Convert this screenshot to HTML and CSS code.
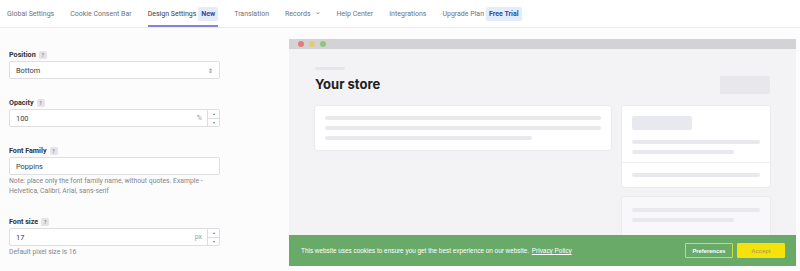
FILE: index.html
```html
<!DOCTYPE html>
<html lang="en">
<head>
  <meta charset="UTF-8" />
  <meta name="viewport" content="width=device-width, initial-scale=1.0"/>
  <title>Design Settings</title>
  <link rel="stylesheet" href="styles.css">
</head>
<body>

  <div class="tabs">
    <div class="tab">Global Settings</div>
    <div class="tab">Cookie Consent Bar</div>
    <div class="tab active">Design Settings <span class="badge">New</span></div>
    <div class="tab">Translation</div>
    <div class="tab">Records <span class="chev">&#8964;</span></div>
    <div class="tab">Help Center</div>
    <div class="tab">Integrations</div>
    <div class="tab">Upgrade Plan <span class="badge">Free Trial</span></div>
  </div>

  <div class="main">
    <div class="form">
      <div class="field">
        <div class="label">Position <span class="help">?</span></div>
        <div class="control">
          <span class="value">Bottom</span>
          <span class="selectArrows">&#8661;</span>
        </div>
      </div>

      <div class="field">
        <div class="label">Opacity <span class="help">?</span></div>
        <div class="control">
          <span class="value">100</span>
          <span class="unit">%</span>
          <div class="spinner"><span>&#9652;</span><span>&#9662;</span></div>
        </div>
      </div>

      <div class="field withNote">
        <div class="label">Font Family <span class="help">?</span></div>
        <div class="control">
          <span class="value">Poppins</span>
        </div>
        <div class="note">Note: place only the font family name, without quotes. Example - Helvetica, Calibri, Arial, sans-serif</div>
      </div>

      <div class="field">
        <div class="label">Font size <span class="help">?</span></div>
        <div class="control">
          <span class="value">17</span>
          <span class="unit">px</span>
          <div class="spinner"><span>&#9652;</span><span>&#9662;</span></div>
        </div>
        <div class="note">Default pixel size is 16</div>
      </div>
    </div>

    <div class="preview">
      <div class="chrome">
        <span class="dot red"></span>
        <span class="dot yellow"></span>
        <span class="dot green"></span>
      </div>
      <div class="store">
        <div class="crumb"></div>
        <div class="storeHead">
          <div class="storeTitle">Your store</div>
          <div class="ghostButton"></div>
        </div>
        <div class="cards">
          <div class="card mainCard">
            <div class="line"></div>
            <div class="line"></div>
            <div class="line short"></div>
          </div>
          <div class="side">
            <div class="card sideCard">
              <div class="sideTop">
                <div class="block"></div>
                <div class="line"></div>
                <div class="line half"></div>
              </div>
              <div class="sideBottom">
                <div class="line"></div>
              </div>
            </div>
            <div class="card sideCard faded">
              <div class="line"></div>
              <div class="line half"></div>
            </div>
          </div>
        </div>
      </div>

      <div class="cookieBar">
        <div class="cookieText">This website uses cookies to ensure you get the best experience on our website. <a href="#">Privacy Policy</a></div>
        <div class="cookieButtons">
          <button class="prefs">Preferences</button>
          <button class="accept">Accept</button>
        </div>
      </div>
    </div>
  </div>

</body>
</html>
```

FILE: styles.css
```css
body {
  margin: 0;
  padding: 0;
  font-family: Roboto, "Liberation Sans", sans-serif;
  background-color: #fcfcfd;
  color: #333;
  overflow: hidden;
  height: 271px;
}

.tabs {
  display: flex;
  height: 28px;
  border-bottom: 1px solid #ececef;
  background: #fff;
  padding-left: 7px;
  gap: 16px;
  box-sizing: border-box;
}

.tab {
  display: flex;
  align-items: center;
  gap: 2px;
  font-size: 7px;
  color: #6f7279;
  height: 27px;
  box-sizing: border-box;
  white-space: nowrap;
}

.tab.active {
  color: #3a3d44;
  border-bottom: 2px solid #8184d9;
  padding-top: 2px;
}

.badge {
  background: #e4ecf9;
  color: #2a4c9f;
  font-weight: bold;
  font-size: 7px;
  padding: 3px 3px;
  border-radius: 2px;
}

.chev {
  font-size: 7px;
  margin-left: 2px;
  margin-top: -3px;
}

.main {
  display: flex;
}

.form {
  width: 289px;
  padding: 22px 69px 0 9px;
  box-sizing: border-box;
  flex-shrink: 0;
}

.field {
  margin-bottom: 19px;
}

.field.withNote {
  margin-bottom: 21px;
}

.label {
  display: flex;
  align-items: center;
  gap: 3px;
  font-size: 7.2px;
  font-weight: bold;
  color: #2f3137;
  height: 9px;
  margin-bottom: 2px;
}

.help {
  display: inline-block;
  width: 8px;
  height: 8px;
  line-height: 8px;
  text-align: center;
  font-size: 5px;
  background: #e4e4e8;
  color: #8b8d93;
  border-radius: 2px;
}

.control {
  display: flex;
  align-items: center;
  height: 18px;
  background: #fff;
  border: 1px solid #dedee2;
  border-radius: 2px;
  box-sizing: border-box;
  padding-left: 6px;
  font-size: 7.4px;
  color: #3a3c42;
}

.value {
  flex: 1;
}

.selectArrows {
  font-size: 6px;
  color: #777;
  margin-right: 6px;
}

.unit {
  color: #9a9ca2;
  font-size: 7px;
  margin-right: 5px;
}

.spinner {
  display: flex;
  flex-direction: column;
  width: 11px;
  height: 100%;
  border-left: 1px solid #dedee2;
}

.spinner span {
  flex: 1;
  font-size: 4px;
  color: #777;
  text-align: center;
  line-height: 8px;
}

.spinner span + span {
  border-top: 1px solid #dedee2;
}

.note {
  font-size: 6.8px;
  color: #84868c;
  line-height: 10px;
  margin-top: 1px;
}

.preview {
  position: relative;
  width: 507px;
  height: 227px;
  margin-top: 11px;
  background: #f3f2f4;
  overflow: hidden;
}

.chrome {
  display: flex;
  align-items: center;
  gap: 5px;
  height: 10px;
  padding-left: 9px;
  background: #d3d2d5;
}

.dot {
  width: 6px;
  height: 6px;
  border-radius: 50%;
}

.dot.red { background: #e8797a; }
.dot.yellow { background: #ecc871; }
.dot.green { background: #8ec77c; }

.store {
  padding: 18px 26px 0 26px;
}

.crumb {
  width: 30px;
  height: 3px;
  border-radius: 2px;
  background: #e6e5e9;
}

.storeHead {
  display: flex;
  justify-content: space-between;
  align-items: center;
  margin-top: 6px;
  height: 18px;
}

.storeTitle {
  font-family: Inter, Roboto, sans-serif;
  font-size: 13px;
  font-weight: bold;
  color: #202124;
  margin-top: -2px;
}

.ghostButton {
  width: 50px;
  height: 18px;
  background: #e8e7eb;
  border-radius: 2px;
}

.cards {
  display: flex;
  align-items: flex-start;
  gap: 11px;
  margin-top: 12px;
}

.card {
  background: #fff;
  border-radius: 2px;
  box-shadow: 0 0 2px rgba(0,0,0,0.12);
}

.mainCard {
  width: 296px;
  padding: 10px;
  box-sizing: border-box;
}

.line {
  height: 4px;
  background: #e9e8ec;
  border-radius: 2px;
  margin-bottom: 6px;
}

.line:last-child {
  margin-bottom: 0;
}

.line.short { width: 75%; }
.line.half { width: 80%; }

.side {
  display: flex;
  flex-direction: column;
  gap: 10px;
  width: 148px;
}

.sideTop {
  padding: 10px 10px 8px;
  border-bottom: 1px solid #ececef;
}

.block {
  width: 60px;
  height: 14px;
  background: #e8e9ef;
  border-radius: 2px;
  margin-bottom: 10px;
}

.sideBottom {
  padding: 10px;
}

.sideCard.faded {
  background: #f8f8fb;
  padding: 11px 10px;
  height: 40px;
}

.cookieBar {
  position: absolute;
  left: 0;
  right: 0;
  bottom: 0;
  height: 31px;
  background: #6aaa69;
  display: flex;
  align-items: center;
  justify-content: space-between;
  padding: 0 11px 0 12px;
  font-family: "Liberation Sans", Arial, sans-serif;
}

.cookieText {
  color: #fff;
  font-size: 6.4px;
}

.cookieText a {
  color: #fff;
  margin-left: 1px;
}

.cookieButtons {
  display: flex;
  gap: 4px;
}

.cookieButtons button {
  width: 48px;
  height: 15px;
  font-family: "Liberation Sans", Arial, sans-serif;
  font-size: 5.8px;
  font-weight: bold;
  border-radius: 1px;
  padding: 0;
}

.prefs {
  background: transparent;
  color: #fff;
  border: 1.5px solid #d3dc3d;
}

.accept {
  background: #f5e20a;
  color: #b7a84a;
  border: 1px solid #f5e20a;
}
```
